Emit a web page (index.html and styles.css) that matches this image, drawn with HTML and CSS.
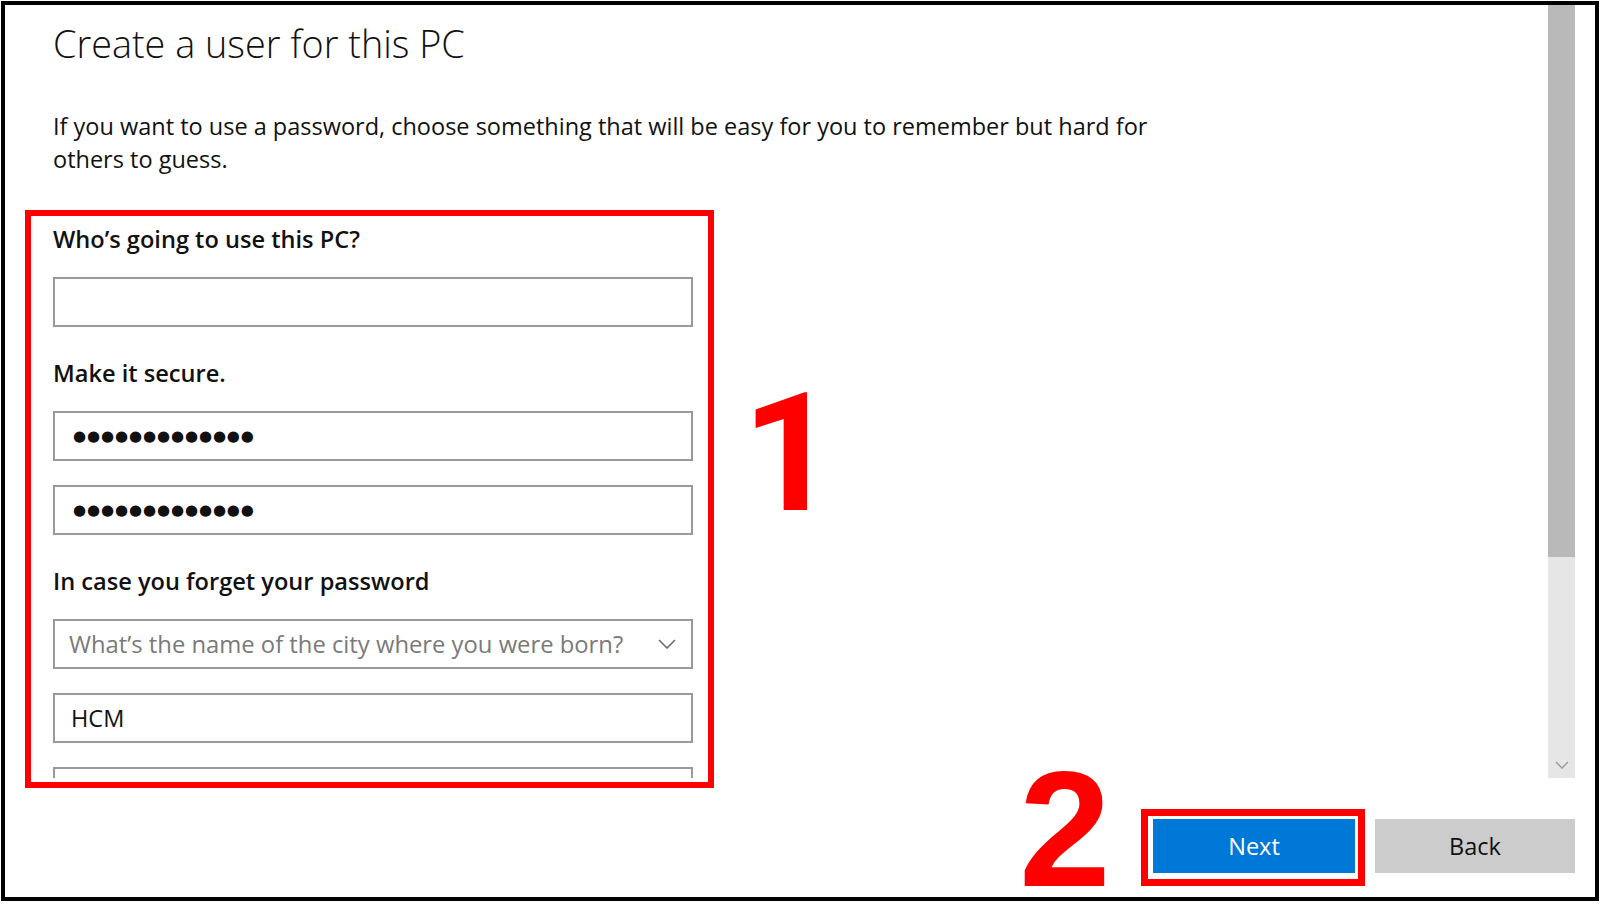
FILE: index.html
```html
<!DOCTYPE html>
<html lang="en">
<head>
<meta charset="utf-8">
<title>Create a user for this PC</title>
<link rel="stylesheet" href="styles.css">
</head>
<body>
<div class="frame">
  <div class="viewport">
    <div class="content">
      <h1 class="title">Create a user for this PC</h1>
      <p class="desc">If you want to use a password, choose something that will be easy for you to remember but hard for others to guess.</p>
      <div class="form">
        <div class="label">Who’s going to use this PC?</div>
        <div class="field"></div>
        <div class="label">Make it secure.</div>
        <div class="field pw"><span class="dots">●●●●●●●●●●●●●</span></div>
        <div class="field pw"><span class="dots">●●●●●●●●●●●●●</span></div>
        <div class="label">In case you forget your password</div>
        <div class="field select">
          <span class="placeholder">What’s the name of the city where you were born?</span>
          <svg class="chev" width="18" height="10" viewBox="0 0 18 10"><path d="M1 1 L9 9 L17 1" fill="none" stroke="#6b6b6b" stroke-width="1.6"/></svg>
        </div>
        <div class="field">HCM</div>
        <div class="field"></div>
      </div>
    </div>
    <div class="scrollbar">
      <div class="thumb"></div>
      <div class="track">
        <svg class="schev" width="14" height="8" viewBox="0 0 14 8"><path d="M1 1 L7 7 L13 1" fill="none" stroke="#9a9a9a" stroke-width="1.4"/></svg>
      </div>
    </div>
  </div>
  <div class="footer">
    <button class="btn primary">Next</button>
    <button class="btn">Back</button>
  </div>
  <div class="mark box-form"></div>
  <div class="mark box-next"></div>
  <div class="mark num num-1">1</div>
  <div class="mark num num-2">2</div>
</div>
</body>
</html>
```

FILE: styles.css
```css
* { box-sizing: border-box; }
html, body { margin: 0; padding: 0; background: #fff; }
body { font-family: "Open Sans", "Noto Sans", sans-serif; color: #000; }

.frame {
  position: relative;
  margin: 1px 0 0 1px;
  width: 1598px;
  height: 900px;
  border: 4px solid #000;
  display: flex;
  flex-direction: column;
}

.viewport { display: flex; height: 773px; flex: none; }
.content { flex: 1; overflow: hidden; padding: 17px 0 0 48px; }

.title { margin: 0; font-size: 37.8px; font-weight: 300; line-height: 44px; color: #111; }
.desc { margin: 44px 0 47px; font-size: 23.5px; line-height: 33px; width: 1130px; color: #111; }

.form { width: 640px; }
.label { margin: 30px 0 22px; font-size: 23.6px; font-weight: 600; line-height: 32px; color: #111; }
.field {
  height: 50px;
  margin-bottom: 24px;
  border: 2px solid #999;
  display: flex;
  align-items: center;
  padding: 0 15px 0 16px;
  font-size: 23.5px;
  color: #111;
}
.dots { font-family: "DejaVu Sans", sans-serif; font-size: 15px; letter-spacing: 0.9px; padding-left: 2px; }
.select { justify-content: space-between; padding-left: 14px; }
.placeholder { color: #7a7a7a; font-size: 23.8px; }

.scrollbar { width: 27px; margin-right: 20px; display: flex; flex-direction: column; }
.thumb { height: 552px; background: #b9b9b9; }
.track { flex: 1; background: #e6e6e6; display: flex; align-items: flex-end; justify-content: center; padding-bottom: 9px; }

.footer { flex: 1; display: flex; justify-content: flex-end; gap: 20px; padding: 41px 20px 0 0; }
.btn {
  width: 200px;
  height: 54px;
  border: 0;
  background: #cccccc;
  color: #111;
  font-family: "Open Sans", "Noto Sans", sans-serif;
  font-size: 23.5px;
}
.primary { width: 202px; background: #0078d7; color: #fff; }

.mark { position: absolute; }
.box-form { left: 20px; top: 205px; width: 689px; height: 578px; border: 6px solid #ff0000; }
.box-next { left: 1136px; top: 804px; width: 224px; height: 77px; border: 7px solid #ff0000; }
.num { font-weight: 700; line-height: 120px; color: #ff0000; }
.num-1 { left: 737px; top: 389px; font-family: Roboto, "Liberation Sans", sans-serif; font-size: 166px; }
.num-2 { left: 1014px; top: 764px; font-family: "Liberation Sans", Arial, sans-serif; font-size: 165px; }
```
